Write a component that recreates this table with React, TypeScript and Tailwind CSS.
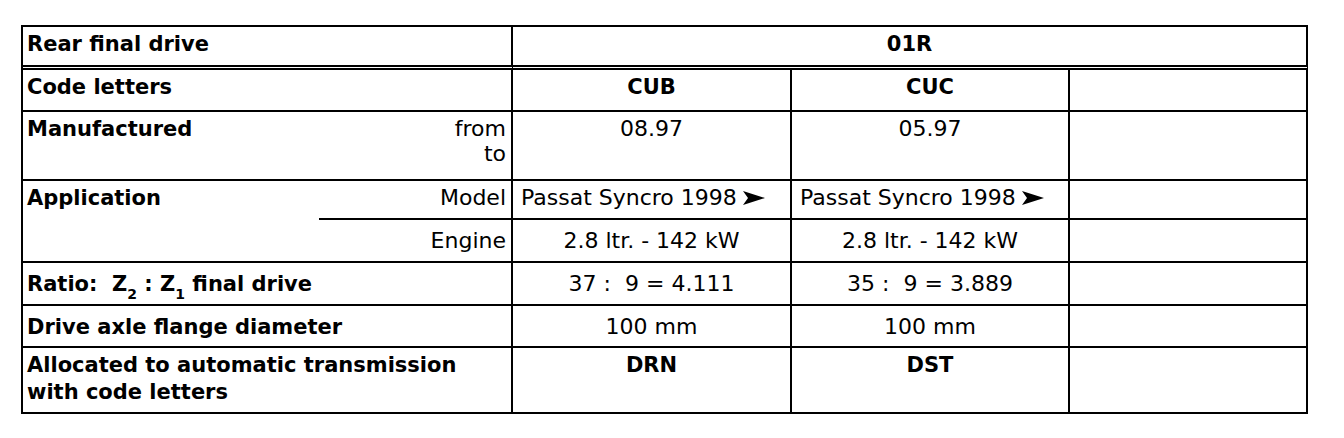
import React from 'react';

const Arrow: React.FC = () => (
  <svg width="22" height="14" viewBox="0 0 22 14" className="inline-block ml-[6px] -mt-[3px]">
    <path d="M0 0 L22 7 L0 14 L5 7 Z" fill="#000" />
  </svg>
);

const cell = 'border-r-2 border-b-2 border-black';
const label = 'pl-[4px] pt-1 font-bold text-[21px] leading-[26px]';
const value = 'pt-1 text-center text-[22px] leading-[26px]';
const code = 'pt-1 text-center font-bold text-[21px] leading-[26px]';
const doubleLine = 'border-r-2 border-b-[5px] border-black [border-bottom-style:double]';

const App: React.FC = () => {
  return (
    <div className="w-[1344px] h-[438px] bg-white pt-[25px] pl-[21px] text-black font-['DejaVu_Sans',sans-serif]">
      <div className="grid grid-cols-[296px_194px_279px_278px_238px] grid-rows-[43px_42px_69px_39px_43px_43px_42px_66px] w-[1287px] border-l-2 border-t-2 border-black">
        {/* Row 1 */}
        <div className={`col-span-2 ${doubleLine} ${label}`}>Rear final drive</div>
        <div className={`col-span-3 ${doubleLine} ${code}`}>01R</div>

        {/* Code letters */}
        <div className={`col-span-2 ${cell} ${label}`}>Code letters</div>
        <div className={`${cell} ${code}`}>CUB</div>
        <div className={`${cell} ${code}`}>CUC</div>
        <div className={cell}></div>

        {/* Manufactured */}
        <div className={`col-span-2 ${cell} flex justify-between pr-[5px] ${label}`}>
          <span>Manufactured</span>
          <span className="flex flex-col items-end font-normal text-[22px] leading-[25px]">
            <span>from</span>
            <span>to</span>
          </span>
        </div>
        <div className={`${cell} ${value}`}>08.97</div>
        <div className={`${cell} ${value}`}>05.97</div>
        <div className={cell}></div>

        {/* Application */}
        <div className={`row-span-2 border-b-2 border-black ${label}`}>Application</div>
        <div className={`${cell} pr-[5px] pt-1 text-right text-[22px] leading-[26px]`}>Model</div>
        <div className={`${cell} pt-1 pl-[8px] text-[22px] leading-[26px] whitespace-nowrap`}>
          Passat Syncro 1998<Arrow />
        </div>
        <div className={`${cell} pt-1 pl-[8px] text-[22px] leading-[26px] whitespace-nowrap`}>
          Passat Syncro 1998<Arrow />
        </div>
        <div className={cell}></div>

        <div className={`${cell} pr-[5px] pt-2 text-right text-[22px] leading-[26px]`}>Engine</div>
        <div className={`${cell} ${value} pt-2`}>2.8 ltr. - 142 kW</div>
        <div className={`${cell} ${value} pt-2`}>2.8 ltr. - 142 kW</div>
        <div className={cell}></div>

        {/* Ratio */}
        <div className={`col-span-2 ${cell} ${label} pt-2 whitespace-pre`}>
          Ratio:  Z<sub className="text-[14px] align-[-4px]">2</sub> : Z<sub className="text-[14px] align-[-4px]">1</sub> final drive
        </div>
        <div className={`${cell} ${value} pt-2 whitespace-pre`}>37 :  9 = 4.111</div>
        <div className={`${cell} ${value} pt-2 whitespace-pre`}>35 :  9 = 3.889</div>
        <div className={cell}></div>

        {/* Drive axle */}
        <div className={`col-span-2 ${cell} ${label} pt-2`}>Drive axle flange diameter</div>
        <div className={`${cell} ${value} pt-2`}>100 mm</div>
        <div className={`${cell} ${value} pt-2`}>100 mm</div>
        <div className={cell}></div>

        {/* Allocated */}
        <div className={`col-span-2 ${cell} ${label} leading-[27px]`}>
          Allocated to automatic transmission
          <br />
          with code letters
        </div>
        <div className={`${cell} ${code}`}>DRN</div>
        <div className={`${cell} ${code}`}>DST</div>
        <div className={cell}></div>
      </div>
    </div>
  );
};

export default App;
